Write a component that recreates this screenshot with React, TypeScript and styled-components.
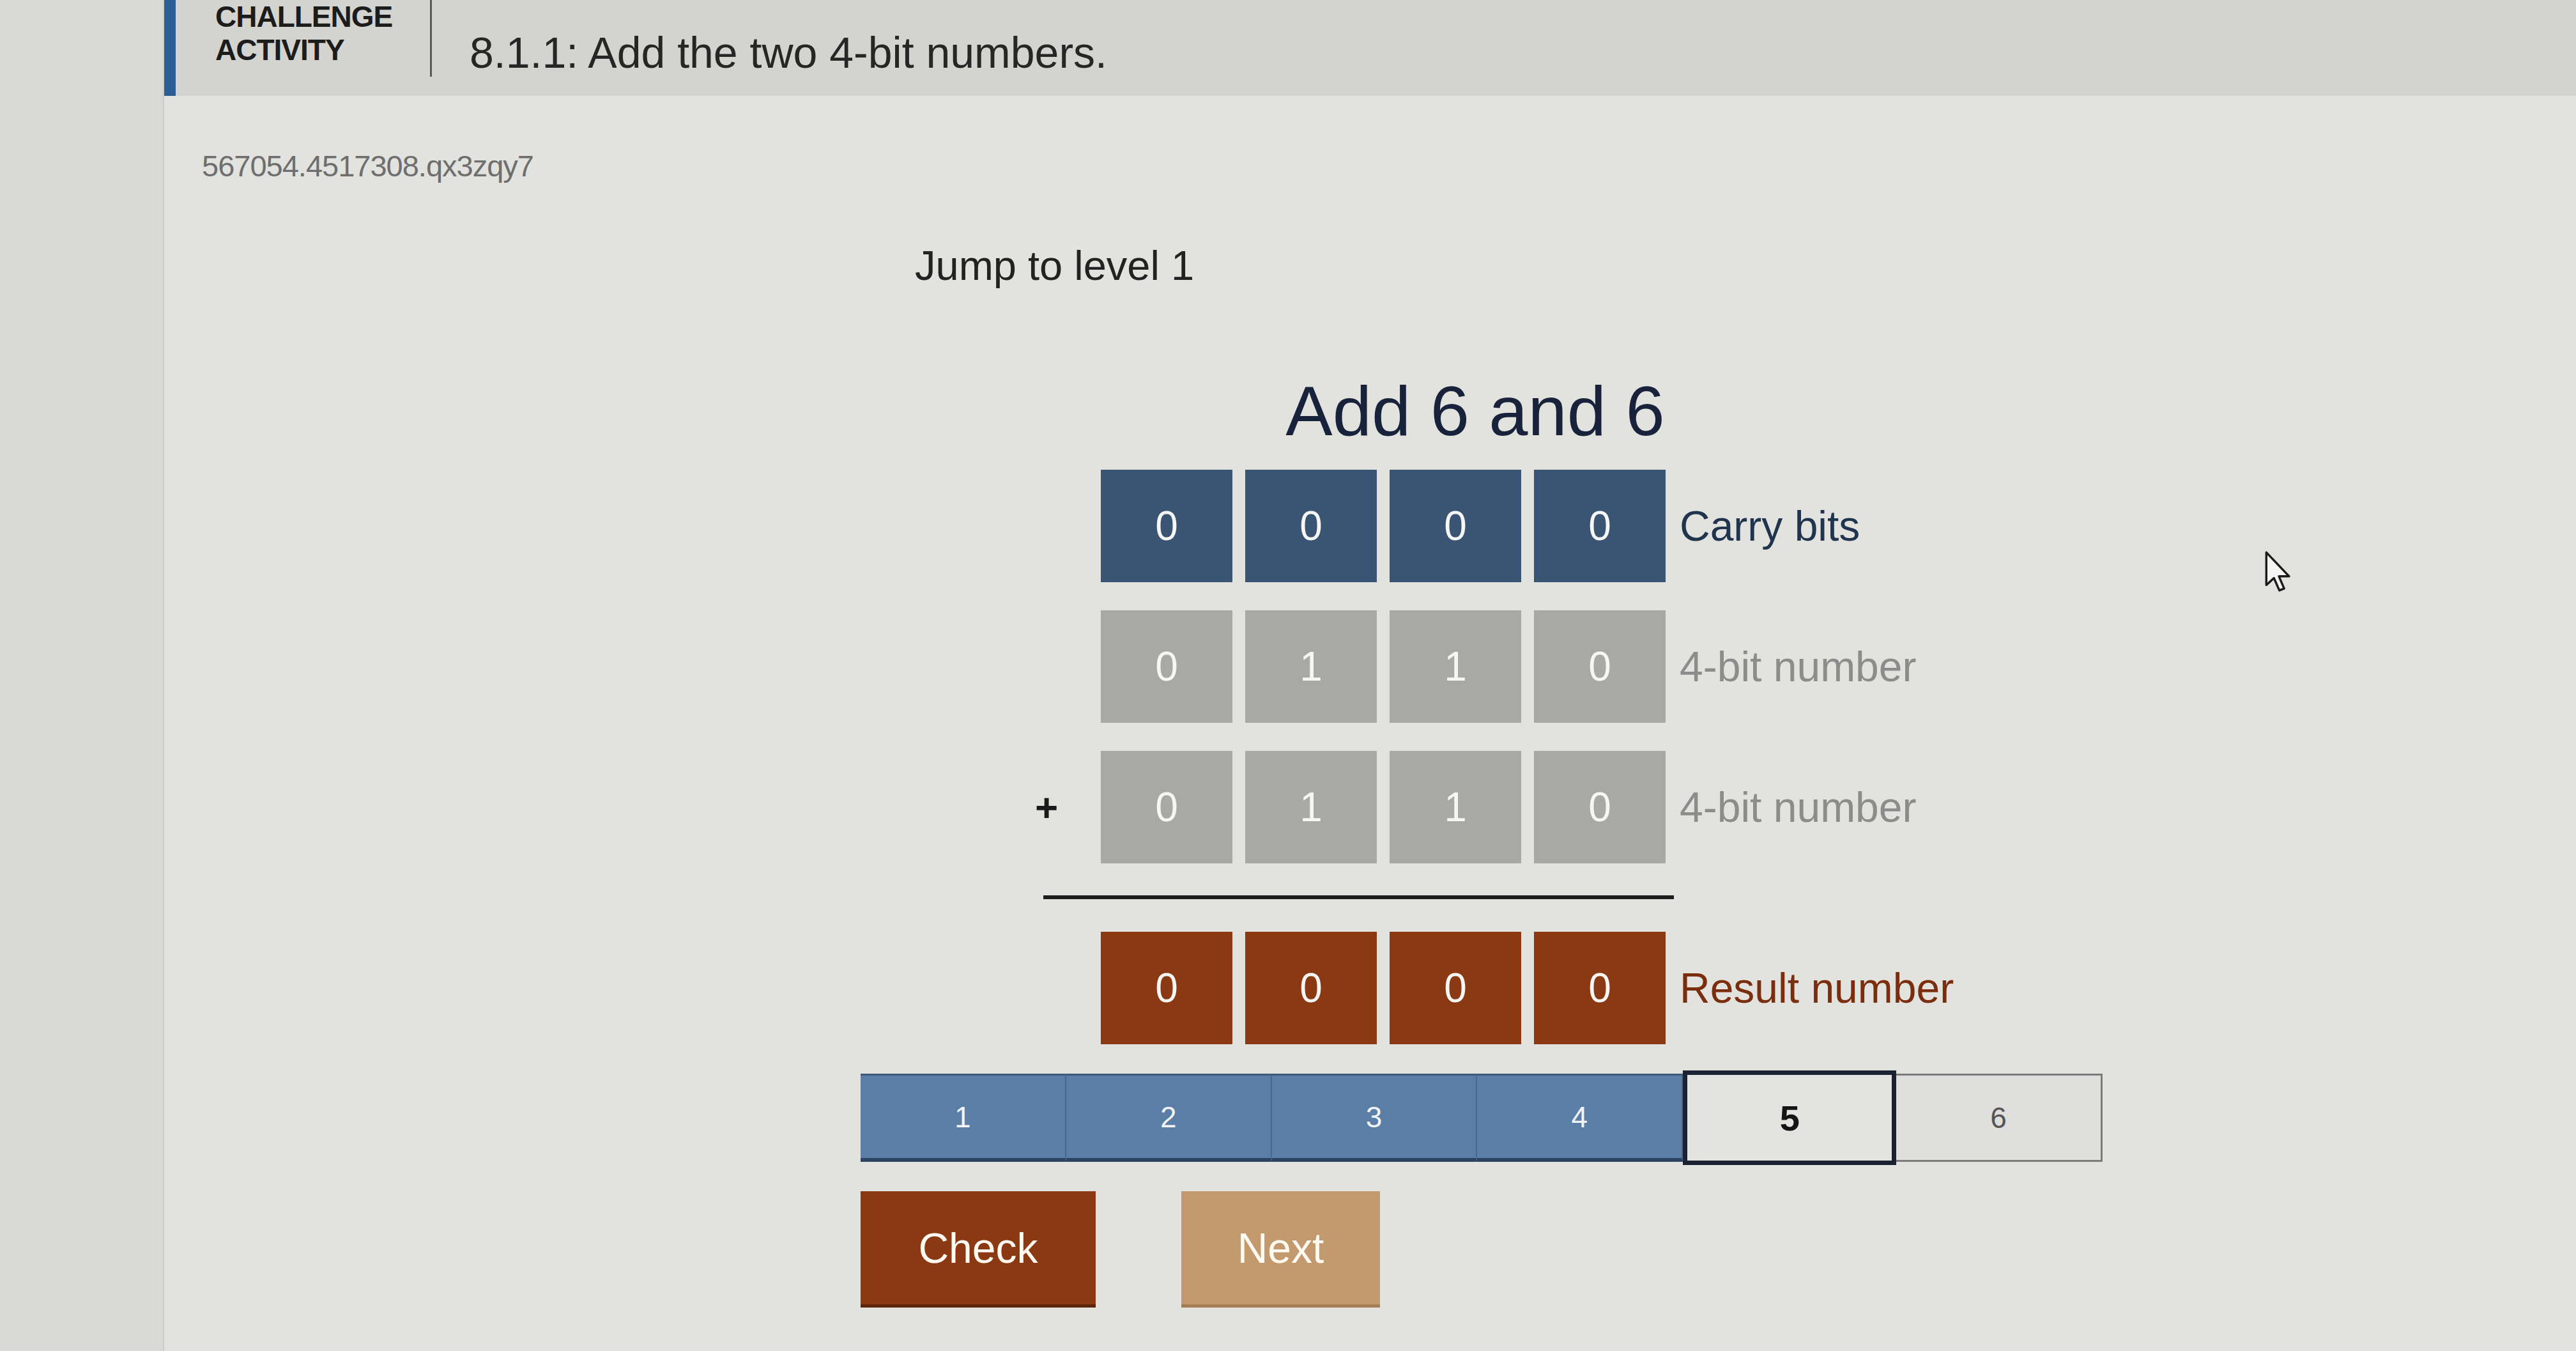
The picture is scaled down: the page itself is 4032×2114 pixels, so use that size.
import React from 'react';
import styled, { createGlobalStyle } from 'styled-components';

const GlobalStyle = createGlobalStyle`
  html, body {
    margin: 0;
    padding: 0;
    width: 4032px;
    height: 2114px;
    overflow: hidden;
    background: #e2e2df;
    font-family: "Liberation Sans", Arial, sans-serif;
  }
`;

const Page = styled.div`
  display: flex;
  width: 4032px;
  height: 2114px;
  position: relative;
`;

const Gutter = styled.div`
  width: 257px;
  flex-shrink: 0;
  background: #d9d9d6;
  border-right: 2px solid #cacac7;
  box-sizing: border-box;
`;

const Panel = styled.div`
  flex: 1;
  display: flex;
  flex-direction: column;
  background: #e2e2df;
`;

const Header = styled.header`
  display: flex;
  align-items: flex-start;
  height: 150px;
  background: #d3d3d0;
  border-left: 18px solid #2b5c93;
  overflow: hidden;
`;

const ActivityLabel = styled.div`
  display: flex;
  flex-direction: column;
  justify-content: flex-end;
  width: 401px;
  height: 120px;
  box-sizing: border-box;
  padding: 0 0 16px 62px;
  border-right: 3px solid #5a5a5a;
  font-size: 46px;
  font-weight: 700;
  line-height: 52px;
  color: #1c1c1c;
  letter-spacing: -1px;
`;

const ActivityTitle = styled.h1`
  margin: 42px 0 0 59px;
  font-size: 68px;
  font-weight: 400;
  line-height: 80px;
  color: #262626;
`;

const Body = styled.main`
  display: flex;
  flex-direction: column;
  padding: 0 59px;
`;

const Code = styled.div`
  margin-top: 85px;
  font-size: 47px;
  line-height: 50px;
  color: #6e6e6e;
  letter-spacing: -1px;
`;

const Widget = styled.section`
  display: flex;
  flex-direction: column;
  width: 1944px;
  margin-left: 1031px;
`;

const JumpLink = styled.div`
  margin: 91px 0 0 85px;
  font-size: 65px;
  line-height: 80px;
  color: #222;
`;

const Problem = styled.div`
  display: flex;
  flex-direction: column;
  margin-left: 273px;
`;

const ProblemTitle = styled.h2`
  width: 1378px;
  margin: 122px 0 27px;
  text-align: center;
  font-size: 110px;
  font-weight: 400;
  line-height: 130px;
  color: #18223a;
`;

const Row = styled.div<{ $gap?: number }>`
  display: flex;
  align-items: center;
  margin-bottom: ${(p) => p.$gap ?? 44}px;
`;

const PlusSlot = styled.div`
  width: 103px;
  font-size: 62px;
  font-weight: 700;
  color: #1a1a1a;
`;

const Boxes = styled.div`
  display: flex;
  gap: 20px;
`;

type Kind = 'carry' | 'operand' | 'result';

const boxColors: Record<Kind, string> = {
  carry: '#3a5474',
  operand: '#a8a8a6',
  result: '#8a3913',
};

const labelColors: Record<Kind, string> = {
  carry: '#20344e',
  operand: '#8c8c8c',
  result: '#7a2e0d',
};

const Bit = styled.div<{ $kind: Kind }>`
  width: 206px;
  height: 176px;
  display: flex;
  align-items: center;
  justify-content: center;
  background: ${(p) => boxColors[p.$kind]};
  color: #f6f6f4;
  font-size: 64px;
`;

const RowLabel = styled.div<{ $kind: Kind }>`
  margin-left: 22px;
  font-size: 66px;
  color: ${(p) => labelColors[p.$kind]};
`;

const SumLine = styled.div`
  width: 987px;
  height: 6px;
  margin: 50px 0 51px 13px;
  background: #1d1d1d;
`;

const Progress = styled.div`
  display: flex;
  height: 138px;
  margin-top: 2px;
`;

const Step = styled.div<{ $state: 'done' | 'current' | 'todo' }>`
  flex: 1;
  display: flex;
  align-items: center;
  justify-content: center;
  box-sizing: border-box;
  font-size: ${(p) => (p.$state === 'current' ? 56 : 46)}px;
  font-weight: ${(p) => (p.$state === 'current' ? 700 : 400)};
  ${(p) =>
    p.$state === 'done'
      ? `
    background: #5a7ea6;
    color: #f2f4f7;
    border-top: 3px solid #3e5b7e;
    border-bottom: 6px solid #2c4462;
    border-right: 2px solid #48698f;
  `
      : p.$state === 'current'
      ? `
    background: #e3e3e1;
    color: #141414;
    border: 7px solid #1b2333;
    margin: -5px 0;
  `
      : `
    background: #dfdfdd;
    color: #555;
    border: 3px solid #7b7b7b;
    border-left: none;
  `}
`;

const Actions = styled.div`
  display: flex;
  align-items: flex-start;
  gap: 134px;
  margin-top: 46px;
`;

const ActionButton = styled.button<{ $variant: 'check' | 'next' }>`
  width: ${(p) => (p.$variant === 'check' ? 368 : 311)}px;
  height: 182px;
  border: none;
  border-bottom: 5px solid ${(p) => (p.$variant === 'check' ? '#5e2409' : '#a57d55')};
  background: ${(p) => (p.$variant === 'check' ? '#8a3912' : '#c39a6d')};
  color: #fffaf2;
  font-family: "Liberation Sans", Arial, sans-serif;
  font-size: 66px;
  cursor: pointer;
  padding: 0;
`;

const Pointer = styled.svg`
  position: absolute;
  left: 3543px;
  top: 861px;
  width: 46px;
  height: 68px;
`;

const rows: { kind: Kind; bits: string[]; label: string; plus?: boolean }[] = [
  { kind: 'carry', bits: ['0', '0', '0', '0'], label: 'Carry bits' },
  { kind: 'operand', bits: ['0', '1', '1', '0'], label: '4-bit number' },
  { kind: 'operand', bits: ['0', '1', '1', '0'], label: '4-bit number', plus: true },
];

const result = { kind: 'result' as Kind, bits: ['0', '0', '0', '0'], label: 'Result number' };

const levels = [1, 2, 3, 4, 5, 6];
const currentLevel = 5;

const App: React.FC = () => {
  return (
    <>
      <GlobalStyle />
      <Page>
        <Gutter />
        <Panel>
          <Header>
            <ActivityLabel>
              <span>CHALLENGE</span>
              <span>ACTIVITY</span>
            </ActivityLabel>
            <ActivityTitle>8.1.1: Add the two 4-bit numbers.</ActivityTitle>
          </Header>
          <Body>
            <Code>567054.4517308.qx3zqy7</Code>
            <Widget>
              <JumpLink>Jump to level 1</JumpLink>
              <Problem>
                <ProblemTitle>Add 6 and 6</ProblemTitle>
                {rows.map((row, i) => (
                  <Row key={i} $gap={i === rows.length - 1 ? 0 : 44}>
                    <PlusSlot>{row.plus ? '+' : ''}</PlusSlot>
                    <Boxes>
                      {row.bits.map((b, j) => (
                        <Bit key={j} $kind={row.kind}>{b}</Bit>
                      ))}
                    </Boxes>
                    <RowLabel $kind={row.kind}>{row.label}</RowLabel>
                  </Row>
                ))}
                <SumLine />
                <Row $gap={44}>
                  <PlusSlot />
                  <Boxes>
                    {result.bits.map((b, j) => (
                      <Bit key={j} $kind={result.kind}>{b}</Bit>
                    ))}
                  </Boxes>
                  <RowLabel $kind={result.kind}>{result.label}</RowLabel>
                </Row>
              </Problem>
              <Progress>
                {levels.map((n) => (
                  <Step
                    key={n}
                    $state={n < currentLevel ? 'done' : n === currentLevel ? 'current' : 'todo'}
                  >
                    {n}
                  </Step>
                ))}
              </Progress>
              <Actions>
                <ActionButton $variant="check">Check</ActionButton>
                <ActionButton $variant="next">Next</ActionButton>
              </Actions>
            </Widget>
          </Body>
        </Panel>
        <Pointer viewBox="0 0 13 20">
          <path
            d="M1 1 L1 16 L4.5 12.8 L7 18.5 L9.2 17.6 L6.8 12 L11.5 12 Z"
            fill="#f4f4f4"
            stroke="#1a1a1a"
            strokeWidth="1"
            strokeLinejoin="round"
          />
        </Pointer>
      </Page>
    </>
  );
};

export default App;
